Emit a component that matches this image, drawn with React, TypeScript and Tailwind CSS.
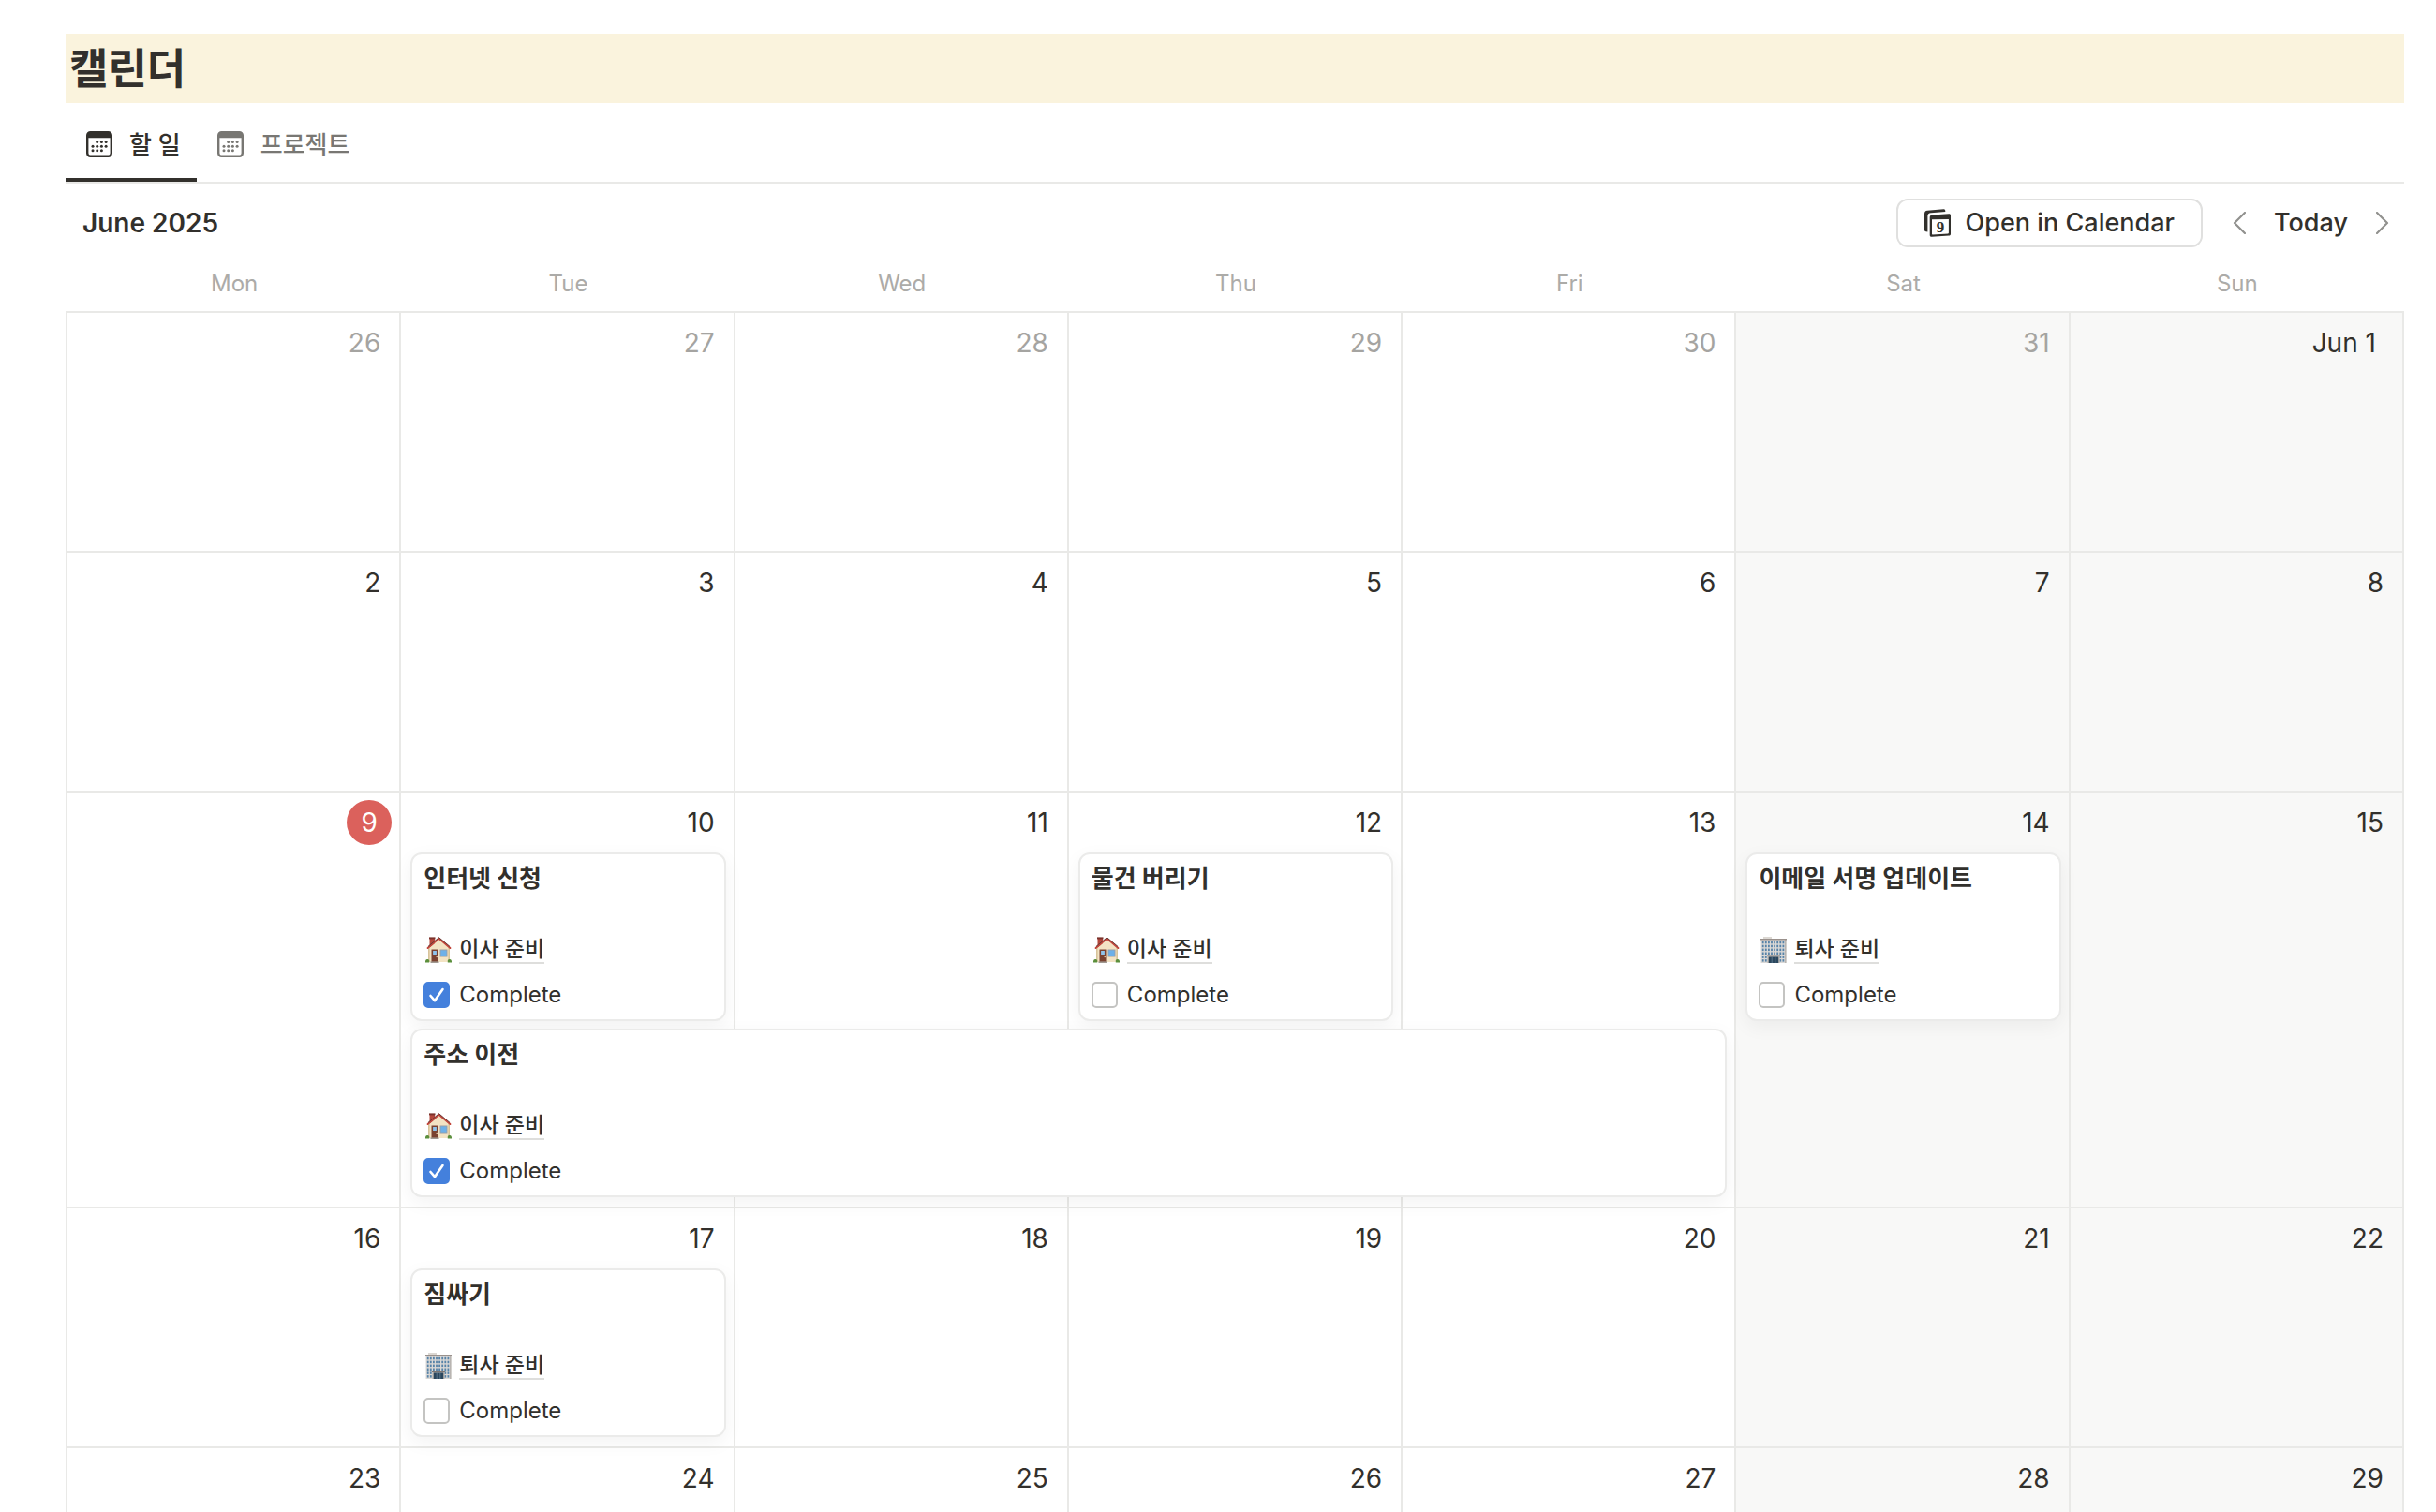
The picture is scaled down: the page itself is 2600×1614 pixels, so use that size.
import { useState } from "react";
import clsx from "clsx";

type Project = { name: string; icon: "house" | "office" };

type Task = {
  id: string;
  title: string;
  project: Project;
  complete: boolean;
  placement: string;
};

type Day = {
  label: string;
  muted?: boolean;
  today?: boolean;
};

const MOVING: Project = { name: "이사 준비", icon: "house" };
const LEAVING: Project = { name: "퇴사 준비", icon: "office" };

const WEEKDAYS = ["Mon", "Tue", "Wed", "Thu", "Fri", "Sat", "Sun"];

const COLUMNS = [
  "col-start-1",
  "col-start-2",
  "col-start-3",
  "col-start-4",
  "col-start-5",
  "col-start-6",
  "col-start-7",
];

const range = (from: number, to: number): Day[] =>
  Array.from({ length: to - from + 1 }, (_, i) => ({
    label: String(from + i),
  }));

const WEEKS: { days: Day[]; tasks: Task[] }[] = [
  {
    days: [
      ...range(26, 31).map((day) => ({ ...day, muted: true })),
      { label: "Jun 1" },
    ],
    tasks: [],
  },
  { days: range(2, 8), tasks: [] },
  {
    days: [{ label: "9", today: true }, ...range(10, 15)],
    tasks: [
      {
        id: "internet",
        title: "인터넷 신청",
        project: MOVING,
        complete: true,
        placement: "col-start-2 row-start-2",
      },
      {
        id: "declutter",
        title: "물건 버리기",
        project: MOVING,
        complete: false,
        placement: "col-start-4 row-start-2",
      },
      {
        id: "signature",
        title: "이메일 서명 업데이트",
        project: LEAVING,
        complete: false,
        placement: "col-start-6 row-start-2",
      },
      {
        id: "address",
        title: "주소 이전",
        project: MOVING,
        complete: true,
        placement: "col-start-2 col-end-6 row-start-3",
      },
    ],
  },
  {
    days: range(16, 22),
    tasks: [
      {
        id: "packing",
        title: "짐싸기",
        project: LEAVING,
        complete: false,
        placement: "col-start-2 row-start-2",
      },
    ],
  },
  { days: range(23, 29), tasks: [] },
];

function CalendarIcon() {
  return (
    <svg viewBox="0 0 28 28" className="h-7 w-7" fill="currentColor" aria-hidden>
      <path
        fillRule="evenodd"
        d="M4.500 0h19A4.500 4.500 0 0 1 28 4.500v19a4.500 4.500 0 0 1-4.500 4.500h-19A4.500 4.500 0 0 1 0 23.500v-19A4.500 4.500 0 0 1 4.500 0ZM2.400 7.300V23a2.600 2.600 0 0 0 2.600 2.600h18a2.600 2.600 0 0 0 2.600-2.600V7.300Z"
      />
      {[11.6, 16.2, 20.8].map((y, row) =>
        [7, 11.7, 16.4, 21.1].map((x, col) =>
          (row === 0 && col === 0) || (row === 2 && col === 3) ? null : (
            <circle key={`${x}-${y}`} cx={x} cy={y} r={1.5} />
          ),
        ),
      )}
    </svg>
  );
}

function OpenCalendarIcon() {
  return (
    <svg viewBox="0 0 28 30" className="h-[30px] w-7" fill="currentColor" aria-hidden>
      <path d="M0 5.2C0 2.8 1 1.900 3 1.700L20.500 .3C21.700 .2 22.300 1 22.300 2.200V3.100L7 4.200C4.400 4.400 3.400 5.400 3.400 7.800V24.600L1.800 24.300C.6 24.100 0 23.600 0 22.300Z" />
      <path
        fillRule="evenodd"
        d="M8.200 6.400L26 5.200C27.300 5.100 28 5.700 28 7V26.400C28 27.800 27.400 28.400 26.100 28.500L8 29.700C6.400 29.800 5.700 29.200 5.700 27.700V9C5.700 7.300 6.500 6.500 8.200 6.400ZM8 11.300V26.800C8 27.300 8.200 27.500 8.700 27.500L25.200 26.400C25.700 26.400 25.900 26.100 25.900 25.600V10.900Z"
      />
      <text
        x="17"
        y="24.600"
        fontSize="17"
        fontWeight="700"
        textAnchor="middle"
        className="font-['Liberation_Serif',serif]"
      >
        9
      </text>
    </svg>
  );
}

function HouseIcon() {
  return (
    <svg viewBox="0 0 28 28" className="h-7 w-7" aria-hidden>
      <path d="M3 12.500L14.500 2L26 12.500V27H3Z" fill="#f3e3c3" />
      <path d="M3 12.500V27h1.600V11.500ZM26 12.500V27h-1.600V11.500Z" fill="#d8c39b" />
      <path d="M4.500 1.500h5.500v5.500L4.500 11.500Z" fill="#b5483c" />
      <path d="M4 .4h6.500v2H4Z" fill="#7b322b" />
      <path
        d="M2.600 12L14.500 1.800L26.400 12"
        fill="none"
        stroke="#c2453b"
        strokeWidth="2"
        strokeLinecap="round"
        strokeLinejoin="round"
      />
      <path
        d="M3 10.400L14.500 .7L26 10.400"
        fill="none"
        stroke="#5f3a34"
        strokeWidth=".9"
      />
      <path d="M6.500 13.500h7v13.500h-7Z" fill="#7a4230" />
      <path d="M8.100 15h3.800v4H8.100Z" fill="#8fc3ea" />
      <circle cx="12.200" cy="21.500" r=".7" fill="#f1deb8" />
      <path d="M15.500 13.500h8v8h-8Z" fill="#9a9da2" />
      <path d="M16.400 14.400h6.200v6.200h-6.200Z" fill="#6db0e8" />
      <path d="M5.500 26.400h9V28h-9Z" fill="#a19a92" />
      <path d="M0 27.500v-1.300a2.200 2.200 0 0 1 4.200-.9v2.200Z" fill="#5b8f3c" />
      <path d="M28 27.500v-1.300a2.200 2.200 0 0 0-4.200-.9v2.200Z" fill="#5b8f3c" />
    </svg>
  );
}

function OfficeIcon() {
  const floors = [4.8, 8.7, 12.6, 16.500, 20.400, 24.100];
  const windows = [1.8, 4.900, 8, 11.100, 14.200, 17.300, 20.400, 23.500];
  return (
    <svg viewBox="0 0 28 28" className="h-7 w-7" aria-hidden>
      <path d="M3 0h9v3H3Z" fill="#dcd8d3" />
      <path d="M.5 3h27v25H.5Z" fill="#dad8d6" />
      <path d="M26 3h1.500v25H26Z" fill="#b9b5b2" />
      <path d="M0 2h28v1.500H0Z" fill="#9a918c" />
      {floors.map((y) =>
        windows.map((x) => (
          <rect key={`${x}-${y}`} x={x} y={y} width="1.800" height="2.500" fill="#5783a8" />
        )),
      )}
      <path d="M7.500 20h13v8h-13Z" fill="#b5b0ac" />
      <path d="M7 19.500h14v1.500H7Z" fill="#7b7573" />
      <path d="M8.800 21.500h10.400V28H8.800Z" fill="#2b475e" />
      <path d="M12.200 21.500V28M15.800 21.500V28" stroke="#6f8ba1" strokeWidth=".7" />
    </svg>
  );
}

function Chevron({ direction }: { direction: "left" | "right" }) {
  return (
    <svg viewBox="0 0 14 24" className="h-6 w-[14px]" fill="none" aria-hidden>
      <path
        d={direction === "left" ? "M13 1L2 12L13 23" : "M1 1L12 12L1 23"}
        stroke="#91918e"
        strokeWidth="2.200"
        strokeLinecap="round"
        strokeLinejoin="round"
      />
    </svg>
  );
}

function TaskCard({ task }: { task: Task }) {
  const [complete, setComplete] = useState(task.complete);

  return (
    <article
      className={clsx(
        "z-10 mx-[10px] mb-2 rounded-xl border-2 border-[#ebebea] bg-white px-3 pb-[6px] pt-1 shadow-[0_6px_20px_rgba(0,0,0,0.05)]",
        task.placement,
      )}
    >
      <h3 className="flex h-[42px] items-center whitespace-nowrap text-[26px] font-bold">
        {task.title}
      </h3>
      <div className="mt-9 flex h-10 items-center gap-2 pl-[2px]">
        {task.project.icon === "house" ? <HouseIcon /> : <OfficeIcon />}
        <a
          href="#"
          className="border-b-2 border-[#dededc] text-[23px] font-medium leading-7"
        >
          {task.project.name}
        </a>
      </div>
      <label className="mt-2 flex h-10 items-center gap-[10px] text-2xl">
        <span className="relative h-7 w-7">
          <input
            type="checkbox"
            checked={complete}
            onChange={(e) => setComplete(e.target.checked)}
            className="block h-7 w-7 appearance-none rounded-[5px] border-2 border-[#c4c4c2] bg-white checked:border-[#4480dc] checked:bg-[#4480dc]"
          />
          {complete && (
            <svg
              viewBox="0 0 28 28"
              className="pointer-events-none absolute inset-0 h-7 w-7"
              fill="none"
              aria-hidden
            >
              <path
                d="M7.500 15L12 20.200L20.500 8"
                stroke="white"
                strokeWidth="2.600"
                strokeLinecap="round"
                strokeLinejoin="round"
              />
            </svg>
          )}
        </span>
        Complete
      </label>
    </article>
  );
}

function DayCell({ day, column }: { day: Day; column: number }) {
  return (
    <div
      className={clsx(
        "row-start-1 row-end-5 flex items-start justify-end border-b-2 border-r-2 border-[#e9e9e7] pt-2",
        COLUMNS[column],
        column > 4 && "bg-[#f8f8f7]",
      )}
    >
      <span
        className={clsx(
          "flex h-12 items-center text-[28px]",
          day.today
            ? "mr-2 w-12 justify-center rounded-full bg-[#db615c] text-white"
            : day.label.length > 2
              ? "mr-7"
              : "mr-5",
          day.muted && "text-[#a5a4a1]",
        )}
      >
        {day.label}
      </span>
    </div>
  );
}

export default function App() {
  return (
    <main className="h-screen overflow-hidden bg-white pl-[70px] pr-[34px] pt-9 font-['Inter','Noto_Sans_CJK_KR',sans-serif] text-[#32302c]">
      <h1 className="flex h-[74px] items-center bg-[#faf3dd] pl-1 pt-[2px] text-[45px] font-bold">
        캘린더
      </h1>

      <nav className="flex border-b-2 border-[#e9e9e7] pt-2 text-[26px] font-medium">
        <button className="flex h-[76px] items-center gap-[18px] border-b-4 border-[#32302c] pl-[22px] pr-[17px]">
          <CalendarIcon />할 일
        </button>
        <button className="flex h-[76px] items-center gap-[18px] border-b-4 border-transparent px-[22px] text-[#787773]">
          <CalendarIcon />
          프로젝트
        </button>
      </nav>

      <header className="flex h-[68px] items-center pl-[18px] pr-4 pt-4 text-[27px]">
        <h2 className="mr-auto text-[28px] font-semibold">June 2025</h2>
        <button className="flex h-[52px] items-center gap-4 rounded-xl border-2 border-[#e0e0df] px-7 font-medium">
          <OpenCalendarIcon />
          Open in Calendar
        </button>
        <button aria-label="Previous month" className="ml-8">
          <Chevron direction="left" />
        </button>
        <button className="mx-[30px] font-medium">Today</button>
        <button aria-label="Next month">
          <Chevron direction="right" />
        </button>
      </header>

      <div className="mt-2 grid h-[60px] grid-cols-7 items-center pl-[2px] pt-[2px] text-center text-2xl text-[#acaba8]">
        {WEEKDAYS.map((weekday) => (
          <span key={weekday}>{weekday}</span>
        ))}
      </div>

      <section className="border-l-2 border-t-2 border-[#e9e9e7]">
        {WEEKS.map((week) => (
          <div
            key={week.days[0].label}
            className="grid min-h-64 grid-cols-7 grid-rows-[64px_auto_auto_minmax(4px,1fr)]"
          >
            {week.days.map((day, i) => (
              <DayCell key={day.label} day={day} column={i} />
            ))}
            {week.tasks.map((task) => (
              <TaskCard key={task.id} task={task} />
            ))}
          </div>
        ))}
      </section>
    </main>
  );
}
